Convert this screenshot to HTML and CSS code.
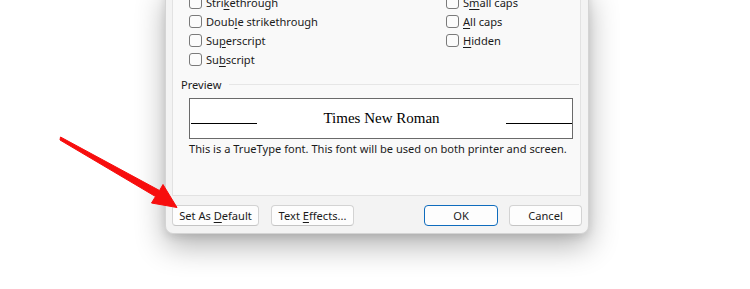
FILE: index.html
```html
<!DOCTYPE html>
<html>
<head>
<meta charset="utf-8">
<link rel="stylesheet" href="styles.css">
</head>
<body>
<div class="stage">
  <div class="dialog">
    <div class="panel">
      <div class="effects">
        <div class="col">
          <label class="cb"><span class="box"></span>Stri<u>k</u>ethrough</label>
          <label class="cb"><span class="box"></span>Doub<u>l</u>e strikethrough</label>
          <label class="cb"><span class="box"></span>Su<u>p</u>erscript</label>
          <label class="cb"><span class="box"></span>Su<u>b</u>script</label>
        </div>
        <div class="col">
          <label class="cb"><span class="box"></span>S<u>m</u>all caps</label>
          <label class="cb"><span class="box"></span><u>A</u>ll caps</label>
          <label class="cb"><span class="box"></span><u>H</u>idden</label>
        </div>
      </div>
      <div class="group-title"><span>Preview</span><div class="rule"></div></div>
      <div class="preview">
        <div class="uline"></div>
        <div class="sample">Times New Roman</div>
        <div class="uline"></div>
      </div>
      <div class="desc">This is a TrueType font. This font will be used on both printer and screen.</div>
    </div>
    <div class="footer">
      <div class="left">
        <button class="btn w-default">Set As <u>D</u>efault</button>
        <button class="btn w-effects">Text <u>E</u>ffects...</button>
      </div>
      <div class="right">
        <button class="btn primary w-ok">OK</button>
        <button class="btn w-cancel">Cancel</button>
      </div>
    </div>
  </div>
  <svg class="arrow" width="750" height="289" viewBox="0 0 750 289">
    <polygon points="60.5,137 159.5,190.5 163,184.5 177,207.5 151.5,203 155.5,196.5 60,140" fill="#f70d0d" stroke="#f70d0d" stroke-width="1" stroke-linejoin="round"/>
  </svg>
</div>
</body>
</html>
```

FILE: styles.css
```css
html, body {
  margin: 0;
  padding: 0;
  background: #ffffff;
  overflow: hidden;
}

.stage {
  position: relative;
  width: 750px;
  height: 289px;
  overflow: hidden;
  font-family: "Noto Sans", "Open Sans", sans-serif;
  font-size: 11.1px;
  color: #1b1b1b;
}

.dialog {
  box-sizing: border-box;
  width: 424px;
  margin-left: 165px;
  margin-top: -13px;
  background: #f3f3f3;
  border: 1px solid #d4d4d4;
  border-top: none;
  border-radius: 0 0 8px 8px;
  box-shadow: 0 12px 30px rgba(0, 0, 0, 0.30), 0 3px 8px rgba(0, 0, 0, 0.10);
  padding: 0 7px 7px 6px;
}

.panel {
  box-sizing: border-box;
  background: #f9f9f9;
  border: 1px solid #e2e2e2;
  border-top: none;
  height: 209px;
  padding: 6px 7px 0 16px;
}

.effects {
  display: grid;
  grid-template-columns: 257px auto;
}

.col {
  display: flex;
  flex-direction: column;
}

.cb {
  display: flex;
  align-items: center;
  height: 19px;
  white-space: nowrap;
}

.box {
  box-sizing: border-box;
  width: 13px;
  height: 13px;
  border: 1px solid #7a7a7a;
  border-radius: 3px;
  background: #fbfbfb;
  margin-right: 4px;
  flex: none;
}

u {
  text-decoration: underline;
  text-underline-offset: 2px;
  text-decoration-thickness: 1px;
}

.group-title {
  display: flex;
  align-items: center;
  margin: 7px 0 0 -8px;
  height: 16px;
}

.rule {
  flex: 1;
  height: 1px;
  background: #e6e6e6;
  margin-left: 8px;
  margin-right: -6px;
}

.preview {
  box-sizing: border-box;
  margin-top: 6px;
  height: 41px;
  border: 1px solid #6a6a6a;
  background: #ffffff;
  display: flex;
  align-items: center;
  justify-content: space-between;
  padding: 0 0 0 1px;
}

.uline {
  width: 66px;
  height: 1px;
  background: #000;
  margin-top: 9px;
}

.sample {
  font-family: "Liberation Serif", "Times New Roman", serif;
  font-size: 15px;
  color: #000;
}

.desc {
  margin-top: 1px;
  height: 18px;
  line-height: 18px;
  white-space: nowrap;
}

.footer {
  display: flex;
  justify-content: space-between;
  margin-top: 9px;
}

.left, .right {
  display: flex;
  gap: 12px;
}

.right {
  gap: 11px;
  margin-right: -1px;
}

.btn {
  box-sizing: border-box;
  height: 21px;
  padding: 0;
  font-family: inherit;
  font-size: 11.1px;
  color: #1b1b1b;
  background: #fdfdfd;
  border: 1px solid #d3d3d3;
  border-bottom-color: #c4c4c4;
  border-radius: 4px;
  text-align: center;
}

.primary {
  border: 1px solid #0f6cbd;
  background: #fdfdfd;
}

.w-default { width: 87px; }
.w-effects { width: 83px; }
.w-ok { width: 74px; }
.w-cancel { width: 73px; }

.arrow {
  position: absolute;
  left: 0;
  top: 0;
  pointer-events: none;
}
```
